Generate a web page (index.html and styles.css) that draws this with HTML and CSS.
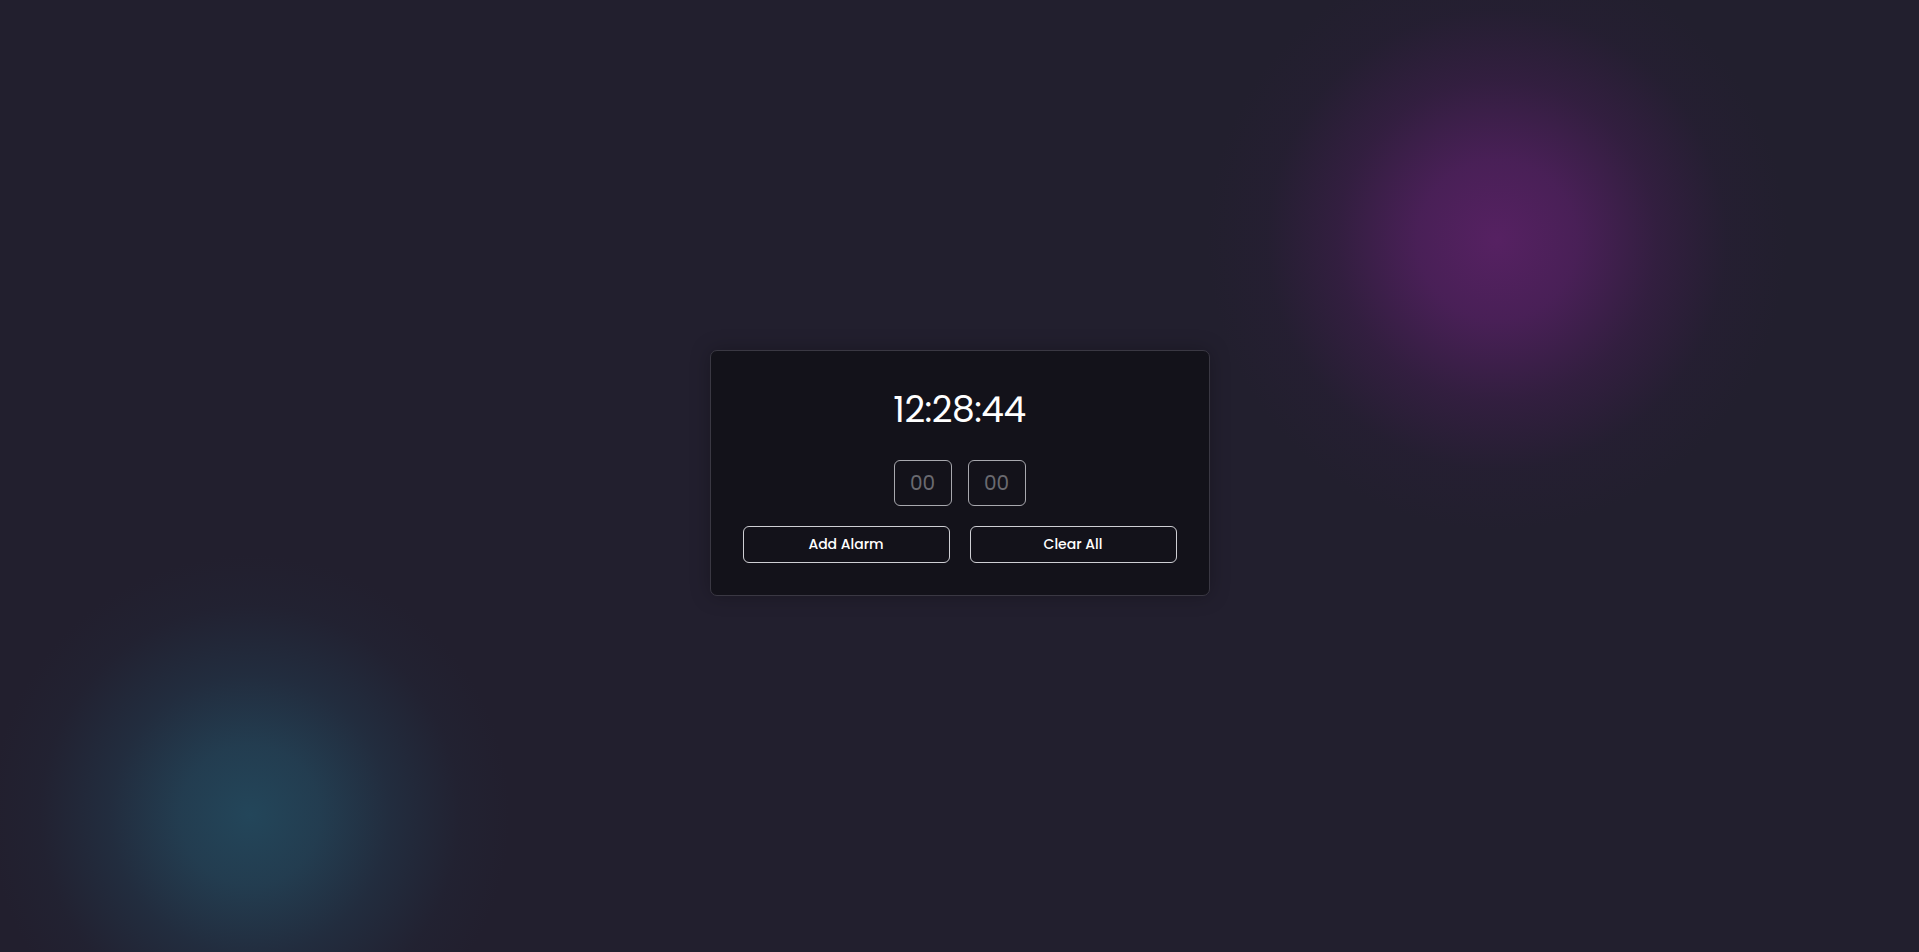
FILE: index.html
```html
<!DOCTYPE html>
<html lang="en">
<head>
<meta charset="utf-8">
<title>Alarm Clock</title>
<link rel="stylesheet" href="styles.css">
</head>
<body>
<main class="card">
  <h1 class="clock">12:28:44</h1>
  <div class="inputs">
    <input class="field" type="text" placeholder="00">
    <input class="field" type="text" placeholder="00">
  </div>
  <div class="actions">
    <button class="btn">Add Alarm</button>
    <button class="btn">Clear All</button>
  </div>
</main>
</body>
</html>
```
FILE: styles.css
```css
* { box-sizing: border-box; }
html, body { height: 100%; }
body {
  margin: 0;
  padding-bottom: 6px;
  font-family: "Poppins", "Lato", "Open Sans", sans-serif;
  color: #fff;
  background-color: #221f2e;
  background-image:
    radial-gradient(circle at 1497px 240px, rgba(86,33,98,1) 0px, rgba(80,32,94,0.85) 80px, rgba(64,30,78,0.55) 160px, rgba(45,30,60,0.25) 230px, rgba(34,31,46,0.06) 290px, rgba(34,31,46,0) 320px),
    radial-gradient(circle at 250px 815px, rgba(35,70,90,1) 0px, rgba(35,66,86,0.85) 70px, rgba(34,56,76,0.55) 140px, rgba(34,42,60,0.25) 210px, rgba(34,31,46,0.06) 260px, rgba(34,31,46,0) 290px);
  background-repeat: no-repeat;
  display: flex;
  align-items: center;
  justify-content: center;
}
.card {
  width: 500px;
  padding: 32px;
  background: #13121a;
  border: 1px solid #3a3843;
  border-radius: 7px;
  box-shadow: 0 0 20px rgba(0,0,0,0.25);
  display: flex;
  flex-direction: column;
  align-items: center;
}
.clock {
  margin: 0;
  font-size: 36px;
  font-weight: 400;
  line-height: 54px;
  letter-spacing: -0.5px;
}
.inputs {
  margin-top: 23px;
  display: flex;
  gap: 16px;
}
.field {
  width: 58px;
  height: 46px;
  background: transparent;
  border: 1px solid #a8a8ae;
  border-radius: 6px;
  color: #fff;
  font-family: inherit;
  font-size: 20px;
  text-align: center;
  outline: none;
}
.field::placeholder { color: #6a6a70; }
.actions {
  margin-top: 20px;
  width: 100%;
  display: grid;
  grid-template-columns: 1fr 1fr;
  gap: 20px;
}
.btn {
  height: 37px;
  background: transparent;
  border: 1px solid #cfcfd4;
  border-radius: 6px;
  color: #fff;
  font-family: inherit;
  font-size: 14px;
  font-weight: 500;
}
```
